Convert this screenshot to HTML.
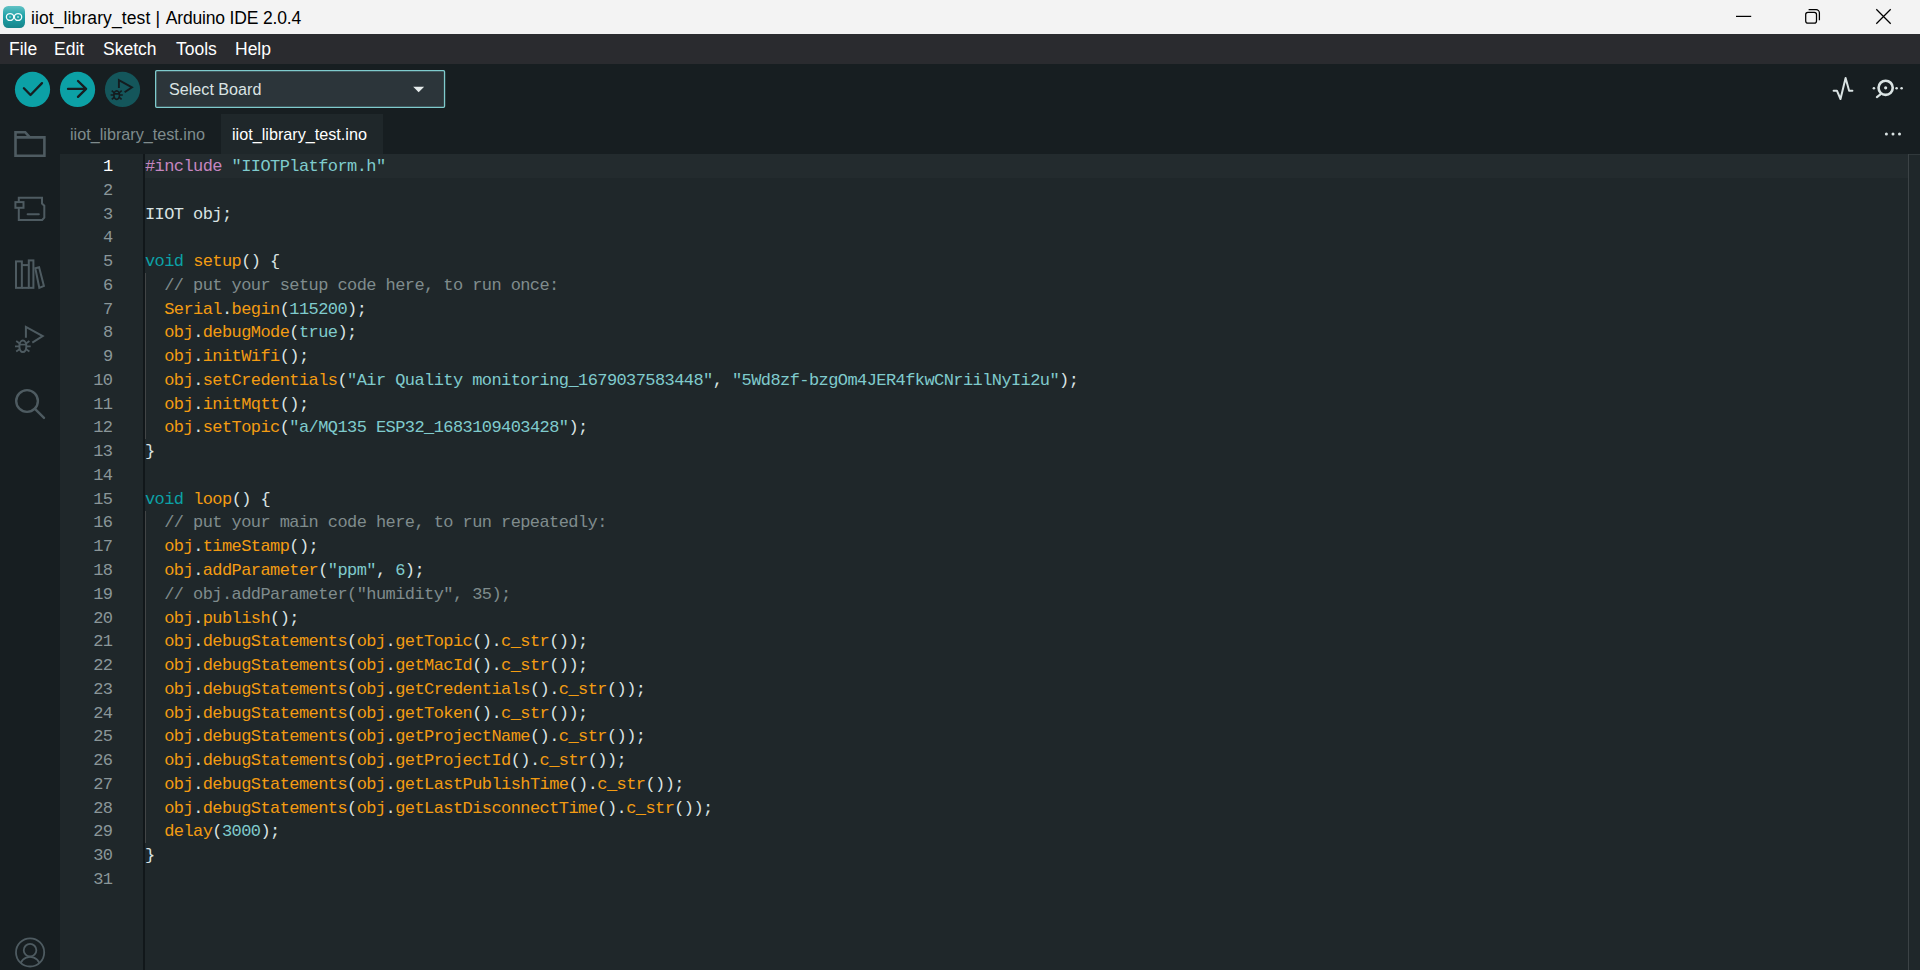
<!DOCTYPE html>
<html>
<head>
<meta charset="utf-8">
<title>iiot_library_test | Arduino IDE 2.0.4</title>
<style>
*{box-sizing:border-box;margin:0;padding:0}
html,body{width:1920px;height:970px;overflow:hidden;background:#1f272a;font-family:"Liberation Sans",sans-serif}
.abs{position:absolute}
#titlebar{left:0;top:0;width:1920px;height:34px;background:#f3f3f3}
#title{left:31px;top:1px;height:34px;line-height:34px;font-size:17.5px;color:#000;white-space:nowrap}
#menubar{left:0;top:34px;width:1920px;height:30px;background:#2a2b2f}
.mi{top:1px;height:30px;line-height:29px;font-size:17.5px;color:#fff;white-space:nowrap}
#toolbar{left:0;top:64px;width:1920px;height:50px;background:#171e21}
.tb{top:8px;width:35px;height:35px;border-radius:50%;background:#0ca1a6}
#board{left:155px;top:6px;width:290px;height:38px;z-index:5}
#board span{position:absolute;left:14px;top:1px;line-height:36px;font-size:16.15px;color:#dae3e3;white-space:nowrap}
#sidebar{left:0;top:114px;width:60px;height:856px;background:#171e21}
#tabbar{left:60px;top:114px;width:1860px;height:40px;background:#171e21}
.tab{top:0;height:40px;line-height:41px;font-size:16.2px;white-space:nowrap}
#editor{left:60px;top:154px;width:1860px;height:816px;background:#1f272a}
#curline{left:85px;top:0;width:1763px;height:24px;background:#232b2e}
#gsep{left:83px;top:0;width:2px;height:816px;background:#11171a}
#rsep{left:1848px;top:0;width:1px;height:816px;background:#3c4346}
#rtop{left:1849px;top:0;width:11px;height:1px;background:#30383b}
#guide1{left:85px;top:119px;width:1px;height:166px;background:#424546}
#guide2{left:85px;top:357px;width:1px;height:332px;background:#424546}
.mono{font-family:"Liberation Mono",monospace;font-size:17px;letter-spacing:-0.58px;white-space:pre}
#nums{left:0;top:1px;width:52.5px;text-align:right;color:#8a9699}
#code{left:85px;top:1px;color:#dae3e3}
.ln{height:23.77px;line-height:23.77px;display:block}
.k{color:#0ca1a6}.f{color:#f39c12}.c{color:#7f8c8d}.s{color:#7fcbcd}.p{color:#c586c0}
</style>
</head>
<body>
<div id="titlebar" class="abs">
  <div id="title" class="abs"><span style="letter-spacing:0.1px">iiot_library_test</span><span style="letter-spacing:0.35px"> | </span><span style="letter-spacing:-0.17px">Arduino IDE 2.0.4</span></div>
</div>
<div id="menubar" class="abs">
  <div class="abs mi" style="left:9px">File</div>
  <div class="abs mi" style="left:54px">Edit</div>
  <div class="abs mi" style="left:103px">Sketch</div>
  <div class="abs mi" style="left:176px">Tools</div>
  <div class="abs mi" style="left:235px">Help</div>
</div>
<div id="toolbar" class="abs">
  <div id="board" class="abs"><span>Select Board</span></div>
</div>
<div id="sidebar" class="abs"></div>
<div id="tabbar" class="abs">
  <div class="abs tab" style="left:10px;color:#7f8c8d">iiot_library_test.ino</div>
  <div class="abs tab" style="left:161px;width:162px;background:#1f272a;color:#fff;padding-left:11px">iiot_library_test.ino</div>
</div>
<div id="editor" class="abs">
  <div id="curline" class="abs"></div>
  <div id="gsep" class="abs"></div>
  <div id="rsep" class="abs"></div>
  <div id="rtop" class="abs"></div>
  <div id="guide1" class="abs"></div>
  <div id="guide2" class="abs"></div>
  <div id="nums" class="abs mono"><span class="ln" style="color:#fff">1</span><span class="ln">2</span><span class="ln">3</span><span class="ln">4</span><span class="ln">5</span><span class="ln">6</span><span class="ln">7</span><span class="ln">8</span><span class="ln">9</span><span class="ln">10</span><span class="ln">11</span><span class="ln">12</span><span class="ln">13</span><span class="ln">14</span><span class="ln">15</span><span class="ln">16</span><span class="ln">17</span><span class="ln">18</span><span class="ln">19</span><span class="ln">20</span><span class="ln">21</span><span class="ln">22</span><span class="ln">23</span><span class="ln">24</span><span class="ln">25</span><span class="ln">26</span><span class="ln">27</span><span class="ln">28</span><span class="ln">29</span><span class="ln">30</span><span class="ln">31</span></div>
  <div id="code" class="abs mono"><span class="ln"><span class="p">#include</span> <span class="s">"IIOTPlatform.h"</span></span><span class="ln"> </span><span class="ln">IIOT obj;</span><span class="ln"> </span><span class="ln"><span class="k">void</span> <span class="f">setup</span>() {</span><span class="ln">  <span class="c">// put your setup code here, to run once:</span></span><span class="ln">  <span class="f">Serial</span>.<span class="f">begin</span>(<span class="s">115200</span>);</span><span class="ln">  <span class="f">obj</span>.<span class="f">debugMode</span>(<span class="s">true</span>);</span><span class="ln">  <span class="f">obj</span>.<span class="f">initWifi</span>();</span><span class="ln">  <span class="f">obj</span>.<span class="f">setCredentials</span>(<span class="s">"Air Quality monitoring_1679037583448"</span>, <span class="s">"5Wd8zf-bzgOm4JER4fkwCNriilNyIi2u"</span>);</span><span class="ln">  <span class="f">obj</span>.<span class="f">initMqtt</span>();</span><span class="ln">  <span class="f">obj</span>.<span class="f">setTopic</span>(<span class="s">"a/MQ135 ESP32_1683109403428"</span>);</span><span class="ln">}</span><span class="ln"> </span><span class="ln"><span class="k">void</span> <span class="f">loop</span>() {</span><span class="ln">  <span class="c">// put your main code here, to run repeatedly:</span></span><span class="ln">  <span class="f">obj</span>.<span class="f">timeStamp</span>();</span><span class="ln">  <span class="f">obj</span>.<span class="f">addParameter</span>(<span class="s">"ppm"</span>, <span class="s">6</span>);</span><span class="ln">  <span class="c">// obj.addParameter("humidity", 35);</span></span><span class="ln">  <span class="f">obj</span>.<span class="f">publish</span>();</span><span class="ln">  <span class="f">obj</span>.<span class="f">debugStatements</span>(<span class="f">obj</span>.<span class="f">getTopic</span>().<span class="f">c_str</span>());</span><span class="ln">  <span class="f">obj</span>.<span class="f">debugStatements</span>(<span class="f">obj</span>.<span class="f">getMacId</span>().<span class="f">c_str</span>());</span><span class="ln">  <span class="f">obj</span>.<span class="f">debugStatements</span>(<span class="f">obj</span>.<span class="f">getCredentials</span>().<span class="f">c_str</span>());</span><span class="ln">  <span class="f">obj</span>.<span class="f">debugStatements</span>(<span class="f">obj</span>.<span class="f">getToken</span>().<span class="f">c_str</span>());</span><span class="ln">  <span class="f">obj</span>.<span class="f">debugStatements</span>(<span class="f">obj</span>.<span class="f">getProjectName</span>().<span class="f">c_str</span>());</span><span class="ln">  <span class="f">obj</span>.<span class="f">debugStatements</span>(<span class="f">obj</span>.<span class="f">getProjectId</span>().<span class="f">c_str</span>());</span><span class="ln">  <span class="f">obj</span>.<span class="f">debugStatements</span>(<span class="f">obj</span>.<span class="f">getLastPublishTime</span>().<span class="f">c_str</span>());</span><span class="ln">  <span class="f">obj</span>.<span class="f">debugStatements</span>(<span class="f">obj</span>.<span class="f">getLastDisconnectTime</span>().<span class="f">c_str</span>());</span><span class="ln">  <span class="f">delay</span>(<span class="s">3000</span>);</span><span class="ln">}</span><span class="ln"> </span></div>
</div>
<svg id="icons" class="abs" style="left:0;top:0" width="1920" height="970" viewBox="0 0 1920 970" fill="none">
  <defs>
    <linearGradient id="lg" x1="0" y1="0" x2="0" y2="1">
      <stop offset="0" stop-color="#62c2c5"/><stop offset="0.45" stop-color="#1fa2a8"/><stop offset="1" stop-color="#17858b"/>
    </linearGradient>
    <clipPath id="acc"><circle cx="30.1" cy="952.4" r="14.2"/></clipPath>
  </defs>
  <!-- app icon -->
  <rect x="3" y="6" width="22" height="22" rx="5.2" fill="url(#lg)"/>
  <g stroke="#f4fbfb" stroke-width="1.3">
    <ellipse cx="10.05" cy="17" rx="3.65" ry="3.4"/><ellipse cx="18.05" cy="17" rx="3.65" ry="3.4"/>
  </g>
  <g stroke="#b5dfe0" stroke-width="0.9"><path d="M9 17h2.1M17 17h2.1M18.05 15.95v2.1"/></g>
  <!-- window controls -->
  <g stroke="#000" stroke-width="1.25">
    <path d="M1736 16.4H1751.2"/>
    <rect x="1805.7" y="12.3" width="10.8" height="10.8" rx="2.2"/>
    <path d="M1808.6 9.7H1816.2a3.2 3.2 0 0 1 3.2 3.2V20.3"/>
    <path d="M1876.3 9.3L1890.7 23.7M1890.7 9.3L1876.3 23.7"/>
  </g>
  <!-- toolbar buttons -->
  <circle cx="32.5" cy="89.45" r="17.6" fill="#0ca1a6"/>
  <circle cx="77.55" cy="89.45" r="17.6" fill="#0ca1a6"/>
  <circle cx="122.5" cy="89.45" r="17.6" fill="#14565b"/>
  <g stroke="#171e21" stroke-width="2.3" stroke-linecap="round" stroke-linejoin="round">
    <path d="M23.9 88.3L30.5 95L42 83.1"/>
    <path d="M68 88.9H86M78 81L86.1 88.9L78 96.9"/>
  </g>
  <g stroke="#141c1f" stroke-width="1.9" stroke-linecap="butt" stroke-linejoin="miter">
    <path d="M118.9 88.1V80.2L132 87.3L124.6 92.3"/>
    <ellipse cx="116.7" cy="95.1" rx="2.8" ry="4.2" stroke-width="1.7"/>
    <path d="M113.9 93.9h5.6M110.6 95h3.3M119.5 95h3.3M111.7 90.7l2.7 2.3M121.7 90.7l-2.7 2.3M111.8 99.4l2.6-2.3M121.6 99.4l-2.6-2.3" stroke-width="1.6"/>
  </g>
  <!-- board select -->
  <rect x="155.65" y="70.55" width="288.9" height="36.8" rx="1.1" fill="#2c353a" stroke="#7fcbcd" stroke-width="1.3"/>
  <path d="M413.2 86.7H424.1L418.65 92.3Z" fill="#e6ecec"/>
  <!-- right toolbar -->
  <g stroke="#dae3e3" stroke-linecap="round" stroke-linejoin="round">
    <path d="M1833.6 90.7H1836.9L1840.5 99L1845.6 77.9L1849.1 90.7H1852.4" stroke-width="2"/>
    <circle cx="1885.65" cy="87.8" r="7.1" stroke-width="2.6"/>
    <path d="M1880.4 94.4L1876.9 97.1" stroke-width="2.2"/>
  </g>
  <g fill="#dae3e3">
    <circle cx="1885.65" cy="87.8" r="1.6"/>
    <circle cx="1873.9" cy="88.2" r="1.3"/><circle cx="1896.6" cy="88.2" r="1.3"/><circle cx="1901.6" cy="88.2" r="1.3"/>
    <circle cx="1886.4" cy="134.1" r="1.5"/><circle cx="1893" cy="134.1" r="1.5"/><circle cx="1899.5" cy="134.1" r="1.5"/>
  </g>
  <!-- sidebar icons -->
  <g stroke="#4e5b61">
    <path d="M15.5 137.4H44.4V155.7H15.5V132.2H25.2L29.8 137.4" stroke-width="2.6" stroke-linejoin="miter"/>
    <g stroke-width="2">
      <path d="M18.8 202.1V197.8H42V203.5L44.3 205.7V217.6L42.2 219.9H18.8V207.8"/>
      <rect x="15.4" y="202.1" width="8.1" height="5.7"/>
      <path d="M27.6 214.3H38.8" stroke-linecap="round"/>
      <rect x="16" y="261.4" width="5.85" height="26.45"/>
      <path d="M21.85 265.1H28.8"/>
      <path d="M21.85 287.85H28.8"/>
      <rect x="28.8" y="260.4" width="4.6" height="27.45"/>
      <path d="M35.3 268.3L39.1 267.2L43.9 285.9L39.3 287.8Z"/>
      <path d="M25.9 337.8V326.9L42.7 336.1L32.3 342.7"/>
      <ellipse cx="22.85" cy="346.3" rx="3.5" ry="5.8"/>
      <path d="M19.6 344.6H26.1" stroke-width="1.6"/>
      <path d="M15 346.3H19.5M26.2 346.3H30.7M16.2 341.1L19.7 343.6M29.4 341.1L26 343.6M16.2 351.4L19.9 348.9M29.4 351.4L25.8 348.9" stroke-width="1.8"/>
    </g>
    <circle cx="27.05" cy="401" r="10.85" stroke-width="2.4"/>
    <path d="M35.2 409.2L44 417.9" stroke-width="2.4" stroke-linecap="round"/>
    <g stroke-width="1.8">
      <circle cx="30.1" cy="952.4" r="14.1"/>
      <circle cx="30.05" cy="950.2" r="6.3"/>
      <circle cx="30.05" cy="966.8" r="10" clip-path="url(#acc)"/>
    </g>
  </g>
</svg>
</body>
</html>
